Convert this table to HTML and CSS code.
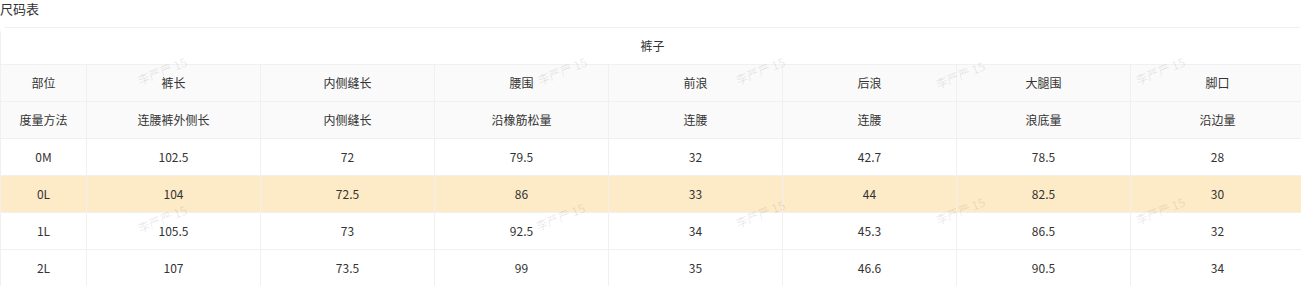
FILE: index.html
```html
<!DOCTYPE html>
<html lang="zh">
<head>
<meta charset="utf-8">
<link rel="stylesheet" href="styles.css">
</head>
<body>
<div class="title">尺码表</div>
<div class="table-wrap">
  <table class="size-table">
    <colgroup>
      <col class="col-first">
      <col><col><col><col><col><col><col>
    </colgroup>
    <tbody>
      <tr class="caption-row"><td colspan="8">裤子</td></tr>
      <tr class="head-row"><td>部位</td><td>裤长</td><td>内侧缝长</td><td>腰围</td><td>前浪</td><td>后浪</td><td>大腿围</td><td>脚口</td></tr>
      <tr class="head-row"><td>度量方法</td><td>连腰裤外侧长</td><td>内侧缝长</td><td>沿橡筋松量</td><td>连腰</td><td>连腰</td><td>浪底量</td><td>沿边量</td></tr>
      <tr><td>0M</td><td>102.5</td><td>72</td><td>79.5</td><td>32</td><td>42.7</td><td>78.5</td><td>28</td></tr>
      <tr class="hl"><td>0L</td><td>104</td><td>72.5</td><td>86</td><td>33</td><td>44</td><td>82.5</td><td>30</td></tr>
      <tr><td>1L</td><td>105.5</td><td>73</td><td>92.5</td><td>34</td><td>45.3</td><td>86.5</td><td>32</td></tr>
      <tr><td>2L</td><td>107</td><td>73.5</td><td>99</td><td>35</td><td>46.6</td><td>90.5</td><td>34</td></tr>
    </tbody>
  </table>
  <div class="wm wm-a1">李严严 15</div>
  <div class="wm wm-a2">李严严 15</div>
  <div class="wm wm-a3">李严严 15</div>
  <div class="wm wm-a4">李严严 15</div>
  <div class="wm wm-a5">李严严 15</div>
  <div class="wm wm-b1">李严严 15</div>
  <div class="wm wm-b2">李严严 15</div>
  <div class="wm wm-b3">李严严 15</div>
  <div class="wm wm-b4">李严严 15</div>
  <div class="wm wm-b5">李严严 15</div>
</div>
</body>
</html>
```

FILE: styles.css
```css
html, body {
  margin: 0;
  padding: 0;
  background: #fff;
}
body {
  font-family: "Noto Sans CJK SC", "Noto Sans", sans-serif;
  color: rgba(0, 0, 0, 0.85);
  width: 1301px;
  height: 286px;
  overflow: hidden;
}
.title {
  font-size: 13px;
  line-height: 17px;
  height: 17px;
  margin-bottom: 10px;
  color: #333;
}
.table-wrap {
  position: relative;
  width: 1305px;
  box-sizing: border-box;
  border-top: 1px solid #f0f0f0;
  border-left: 1px solid #f0f0f0;
  border-top-left-radius: 6px;
  border-top-right-radius: 6px;
}
.size-table {
  width: 100%;
  table-layout: fixed;
  border-collapse: separate;
  border-spacing: 0;
  font-size: 12px;
  color: #333;
}
.col-first {
  width: 86px;
}
.size-table td {
  height: 36px;
  padding: 0;
  text-align: center;
  vertical-align: middle;
  border-right: 1px solid #f0f0f0;
  border-bottom: 1px solid #f0f0f0;
  line-height: 16px;
}
.caption-row td {
  background: #fff;
}
.head-row td {
  background: #fafafa;
}
.hl td {
  background: #fdebc7;
}
.wm {
  position: absolute;
  font-size: 12px;
  color: rgba(0, 0, 0, 0.1);
  transform: rotate(-22deg);
  white-space: nowrap;
  pointer-events: none;
}
.wm-a1 { left: 135px; top: 34px; }
.wm-a2 { left: 535px; top: 34px; }
.wm-a3 { left: 733px; top: 34px; }
.wm-a4 { left: 933px; top: 38px; }
.wm-a5 { left: 1133px; top: 34px; }
.wm-b1 { left: 135px; top: 182px; }
.wm-b2 { left: 533px; top: 180px; }
.wm-b3 { left: 733px; top: 177px; }
.wm-b4 { left: 933px; top: 174px; }
.wm-b5 { left: 1133px; top: 174px; }
```
